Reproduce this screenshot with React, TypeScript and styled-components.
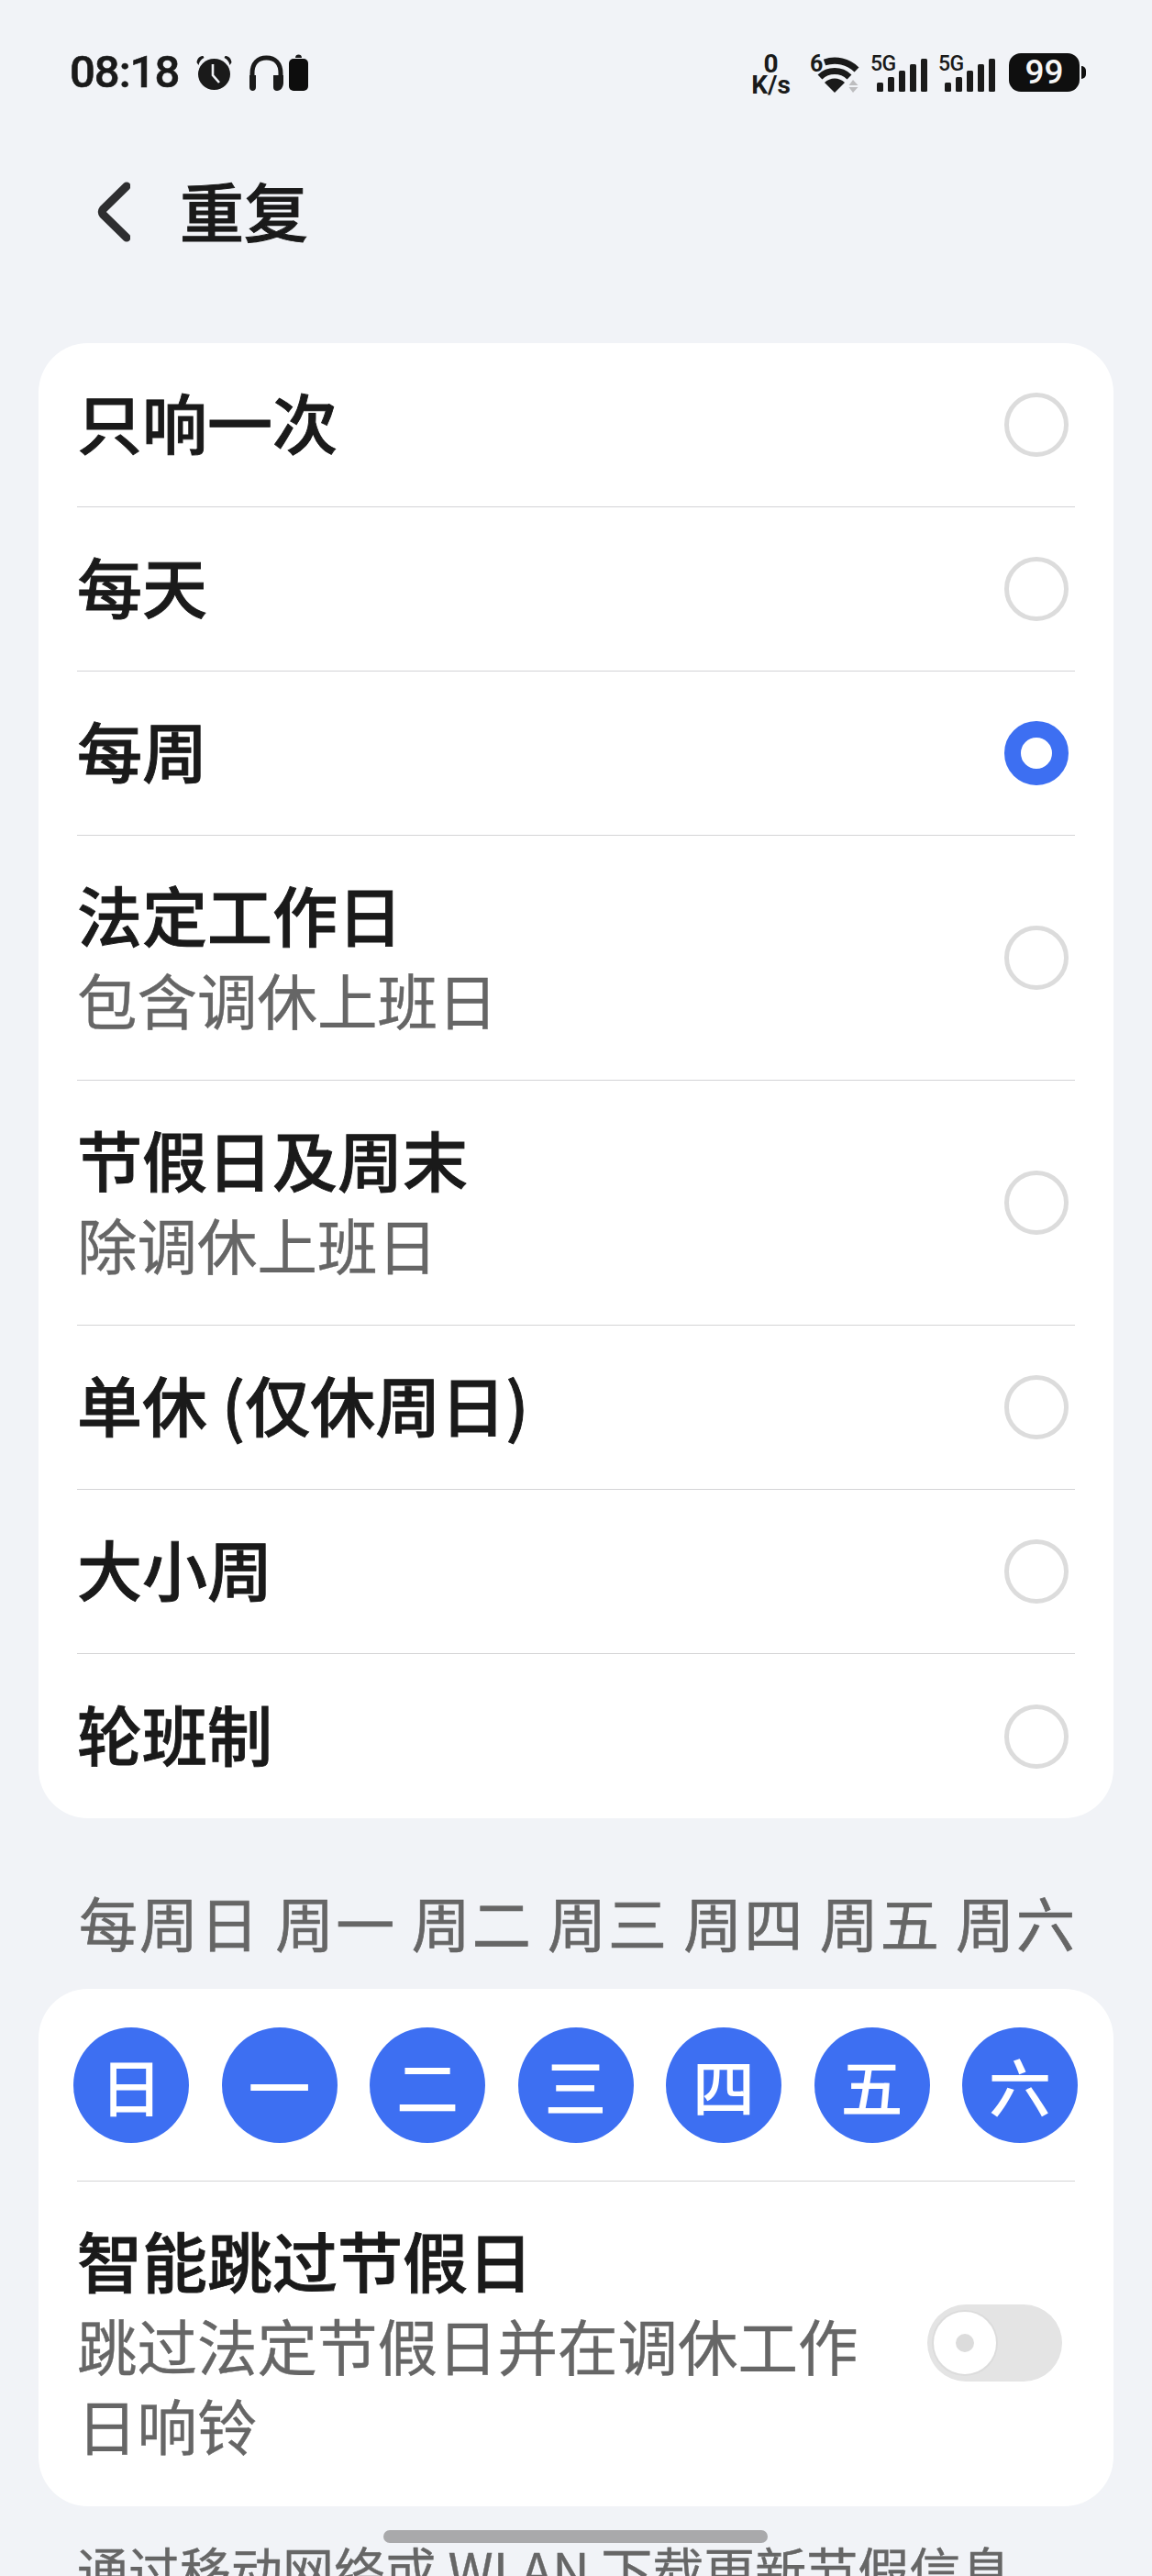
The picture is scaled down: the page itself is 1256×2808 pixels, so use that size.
import React from 'react';
import styled, { createGlobalStyle } from 'styled-components';

const CJK = `"Noto Sans CJK SC", "Noto Sans", sans-serif`;

const GlobalStyle = createGlobalStyle`
  html, body {
    margin: 0;
    padding: 0;
    background: #f1f3f7;
  }
  body {
    font-family: ${CJK};
    overflow: hidden;
  }
`;

type RowData = {
  title: string;
  sub?: string;
  checked?: boolean;
};

const rows: RowData[] = [
  { title: '只响一次' },
  { title: '每天' },
  { title: '每周', checked: true },
  { title: '法定工作日', sub: '包含调休上班日' },
  { title: '节假日及周末', sub: '除调休上班日' },
  { title: '单休 (仅休周日)' },
  { title: '大小周' },
  { title: '轮班制' },
];

const days = ['日', '一', '二', '三', '四', '五', '六'];

const AlarmIcon = () => (
  <svg width="41" height="38" viewBox="0 0 41 38">
    <ellipse cx="20.5" cy="21" rx="17.5" ry="17" fill="#1a1a1a" />
    <path d="M1.5 8 C2 3.500 5 1 8.500 1 L9.500 3 C6.500 4.500 4.500 6.500 3.500 11 Z" fill="#1a1a1a" />
    <path d="M39.500 8 C39 3.500 36 1 32.500 1 L31.500 3 C34.500 4.500 36.500 6.500 37.500 11 Z" fill="#1a1a1a" />
    <path d="M19 10 V22 L26 30" fill="none" stroke="#f1f3f7" strokeWidth="2.600" />
  </svg>
);

const HeadphonesIcon = () => (
  <HeadphonesSvg width="39" height="39" viewBox="0 0 39 39">
    <path d="M4 24 V20 C4 9 10 3 19.500 3 C29 3 35 9 35 20 V24" fill="none" stroke="#1a1a1a" strokeWidth="5" />
    <path d="M1 22 H8 V35 C8 37.500 6.500 39 4.500 39 C2.500 39 1 37.500 1 35 Z" fill="#1a1a1a" />
    <path d="M27 22 H38 V30 C38 35 35 39 31 39 C28.500 39 27 37.500 27 35 Z" fill="#1a1a1a" />
  </HeadphonesSvg>
);

const SmallBatteryIcon = () => (
  <svg width="21" height="40" viewBox="0 0 21 40">
    <path d="M7 4 C7 1.500 8.500 0.500 10.500 0.500 C12.500 0.500 14 1.500 14 4 Z" fill="#1a1a1a" />
    <rect x="0" y="5" width="21" height="35" rx="5" fill="#0d0d0d" />
  </svg>
);

const WifiIcon = () => (
  <TallSvg width="54" height="48" viewBox="0 -5 54 48">
    <text x="0" y="20" fontFamily="Roboto, sans-serif" fontWeight="700" fontSize="25" fill="#1a1a1a">6</text>
    <path d="M16 10 A34 34 0 0 1 51 18" fill="none" stroke="#1a1a1a" strokeWidth="7" />
    <path d="M11 26 A23 23 0 0 1 43 26" fill="none" stroke="#1a1a1a" strokeWidth="7" />
    <path d="M27 43 L16 32 C22 26 32 26 38 32 Z" fill="#1a1a1a" />
    <path d="M47 29 L52.500 35 H42.500 Z M47 43 L52.500 37 H42.500 Z" fill="#bdbdbf" />
  </TallSvg>
);

const SignalIcon = () => (
  <TallSvg width="62" height="46" viewBox="0 -5 62 46">
    <text x="0" y="18" fontFamily="Roboto, sans-serif" fontWeight="500" fontSize="23" letterSpacing="-0.6" fill="#1a1a1a">5G</text>
    <rect x="7" y="31" width="7" height="10" rx="1.500" fill="#1a1a1a" />
    <rect x="19" y="25" width="7" height="16" rx="1.500" fill="#1a1a1a" />
    <rect x="31" y="18" width="7" height="23" rx="1.500" fill="#1a1a1a" />
    <rect x="43" y="11" width="7" height="30" rx="1.500" fill="#1a1a1a" />
    <rect x="55" y="5" width="7" height="36" rx="1.500" fill="#1a1a1a" />
  </TallSvg>
);

const BackIcon = () => (
  <svg width="36" height="66" viewBox="0 0 36 66">
    <path d="M32 5 L6.500 30 C5 32 5 34 6.500 36 L32 61" fill="none" stroke="#2e2e30" strokeWidth="9" strokeLinecap="round" strokeLinejoin="round" />
  </svg>
);

const App = () => {
  return (
    <Page>
      <GlobalStyle />
      <StatusBar>
        <StatusLeft>
          <Time>08:18</Time>
          <AlarmIcon />
          <HeadphonesIcon />
          <SmallBatteryIcon />
        </StatusLeft>
        <StatusRight>
          <NetSpeed>
            <span>0</span>
            <span>K/s</span>
          </NetSpeed>
          <WifiIcon />
          <SignalIcon />
          <SignalIcon />
          <Battery>
            <BatteryBody>99</BatteryBody>
            <BatteryNub />
          </Battery>
        </StatusRight>
      </StatusBar>

      <TitleBar>
        <BackIcon />
        <Title>重复</Title>
      </TitleBar>

      <Card>
        {rows.map((row, i) => (
          <Row key={row.title} $tall={!!row.sub} $last={i === rows.length - 1}>
            <RowText>
              <RowTitle>{row.title}</RowTitle>
              {row.sub && <RowSub>{row.sub}</RowSub>}
            </RowText>
            <Radio $checked={!!row.checked} />
          </Row>
        ))}
      </Card>

      <DaySummary>每周日 周一 周二 周三 周四 周五 周六</DaySummary>

      <SkipCard>
        <DayRow>
          {days.map(day => (
            <DayButton key={day}>{day}</DayButton>
          ))}
        </DayRow>
        <SkipRow>
          <SkipText>
            <RowTitle>智能跳过节假日</RowTitle>
            <SkipSub>跳过法定节假日并在调休工作日响铃</SkipSub>
          </SkipText>
          <Toggle>
            <ToggleThumb />
          </Toggle>
        </SkipRow>
      </SkipCard>

      <Footnote>通过移动网络或 WLAN 下载更新节假信息</Footnote>
      <HomeBar />
    </Page>
  );
};

const Page = styled.div`
  position: relative;
  width: 1256px;
  height: 2808px;
  overflow: hidden;
  background: #f1f3f7;
  color: #1a1a1a;
`;

const StatusBar = styled.div`
  height: 158px;
  padding: 0 72px 0 76px;
  box-sizing: border-box;
  display: flex;
  justify-content: space-between;
  align-items: center;
`;

const StatusLeft = styled.div`
  display: flex;
  align-items: center;
  gap: 5px;
`;

const Time = styled.span`
  width: 132px;
  font-family: Roboto, sans-serif;
  font-size: 49px;
  font-weight: 500;
  line-height: 50px;
  color: #1a1a1a;
  letter-spacing: -1px;
  -webkit-text-stroke: 0.6px #1a1a1a;
`;

const HeadphonesSvg = styled.svg`
  margin-left: 12px;
`;

const TallSvg = styled.svg`
  margin-top: -5px;
  overflow: visible;
`;

const StatusRight = styled.div`
  display: flex;
  align-items: center;
  gap: 12px;
`;

const NetSpeed = styled.div`
  display: flex;
  flex-direction: column;
  align-items: center;
  width: 47px;
  margin-right: 7px;
  margin-top: 3px;
  font-family: Roboto, sans-serif;
  font-weight: 700;
  font-size: 28px;
  line-height: 23px;
`;

const Battery = styled.div`
  display: flex;
  align-items: center;
  margin-left: 3px;
`;

const BatteryBody = styled.div`
  width: 77px;
  height: 42px;
  border-radius: 13px;
  background: #0f0f0f;
  color: #f6f6f6;
  font-family: Roboto, sans-serif;
  font-size: 37px;
  font-weight: 500;
  line-height: 42px;
  text-align: center;
`;

const BatteryNub = styled.div`
  width: 5px;
  height: 14px;
  margin-left: 2px;
  border-radius: 0 7px 7px 0;
  background: #0f0f0f;
`;

const TitleBar = styled.div`
  height: 146px;
  margin-bottom: 70px;
  padding-left: 106px;
  display: flex;
  align-items: center;
  gap: 54px;
`;

const Title = styled.h1`
  margin: 0 0 4px;
  font-size: 70px;
  font-weight: 500;
  line-height: 90px;
  color: #1a1a1a;
  -webkit-text-stroke: 0.9px #1a1a1a;
`;

const Card = styled.div`
  margin: 0 42px;
  padding: 0 42px;
  background: #fff;
  border-radius: 54px;
`;

const Row = styled.div<{ $tall: boolean; $last: boolean }>`
  box-sizing: border-box;
  height: ${props => (props.$tall ? '267px' : '179px')};
  display: flex;
  justify-content: space-between;
  align-items: center;
  padding-right: 7px;
  border-bottom: ${props => (props.$last ? 'none' : '1.5px solid #d4d4d6')};
`;

const RowText = styled.div`
  display: flex;
  flex-direction: column;
`;

const RowTitle = styled.div`
  font-size: 71px;
  font-weight: 500;
  line-height: 80px;
  padding-bottom: 10px;
  color: #1a1a1a;
  -webkit-text-stroke: 0.9px #1a1a1a;
`;

const RowSub = styled.div`
  font-size: 65.5px;
  font-weight: 400;
  line-height: 88px;
  color: #666;
  -webkit-text-stroke: 0.4px #666;
`;

const Radio = styled.div<{ $checked: boolean }>`
  box-sizing: border-box;
  width: 70px;
  height: 70px;
  border-radius: 50%;
  border: ${props => (props.$checked ? '18px solid #3d6ff2' : '5px solid #dcdcdc')};
  background: #fff;
`;

const DaySummary = styled.div`
  margin: 52px 84px 14px 86px;
  font-size: 64px;
  font-weight: 400;
  line-height: 120px;
  color: #666;
  text-align-last: justify;
  -webkit-text-stroke: 0.7px #666;
`;

const SkipCard = styled.div`
  margin: 0 42px;
  height: 564px;
  padding: 42px 42px 0;
  box-sizing: border-box;
  background: #fff;
  border-radius: 54px;
`;

const DayRow = styled.div`
  display: flex;
  justify-content: space-between;
  margin: 0 -3px 0 -4px;
  padding-bottom: 41px;
`;

const DayButton = styled.div`
  width: 126px;
  height: 126px;
  border-radius: 50%;
  background: #3d6ff2;
  color: #fff;
  font-size: 68px;
  font-weight: 500;
  line-height: 126px;
  text-align: center;
`;

const SkipRow = styled.div`
  display: flex;
  justify-content: space-between;
  align-items: center;
  padding-top: 44px;
  border-top: 1.5px solid #d4d4d6;
`;

const SkipText = styled.div`
  width: 880px;
`;

const SkipSub = styled.div`
  font-size: 65.5px;
  font-weight: 400;
  line-height: 87px;
  color: #666;
  -webkit-text-stroke: 0.4px #666;
`;

const Toggle = styled.div`
  flex: none;
  position: relative;
  width: 147px;
  height: 84px;
  margin-right: 14px;
  border-radius: 42px;
  background: #e4e4e4;
`;

const ToggleThumb = styled.div`
  position: absolute;
  left: 7px;
  top: 8px;
  box-sizing: border-box;
  width: 68px;
  height: 68px;
  border-radius: 50%;
  border: 24px solid #fff;
  background: #dcdcdc;
  box-shadow: 0 0 0 2px #dcdcdc;
`;

const Footnote = styled.div`
  margin: 28px 0 0 84px;
  font-size: 56px;
  font-weight: 400;
  line-height: 80px;
  color: #666;
  white-space: nowrap;
  -webkit-text-stroke: 0.4px #666;
`;

const HomeBar = styled.div`
  position: absolute;
  left: 418px;
  top: 2758px;
  width: 419px;
  height: 14px;
  border-radius: 7px;
  background: #a9a9ab;
`;

export default App;
